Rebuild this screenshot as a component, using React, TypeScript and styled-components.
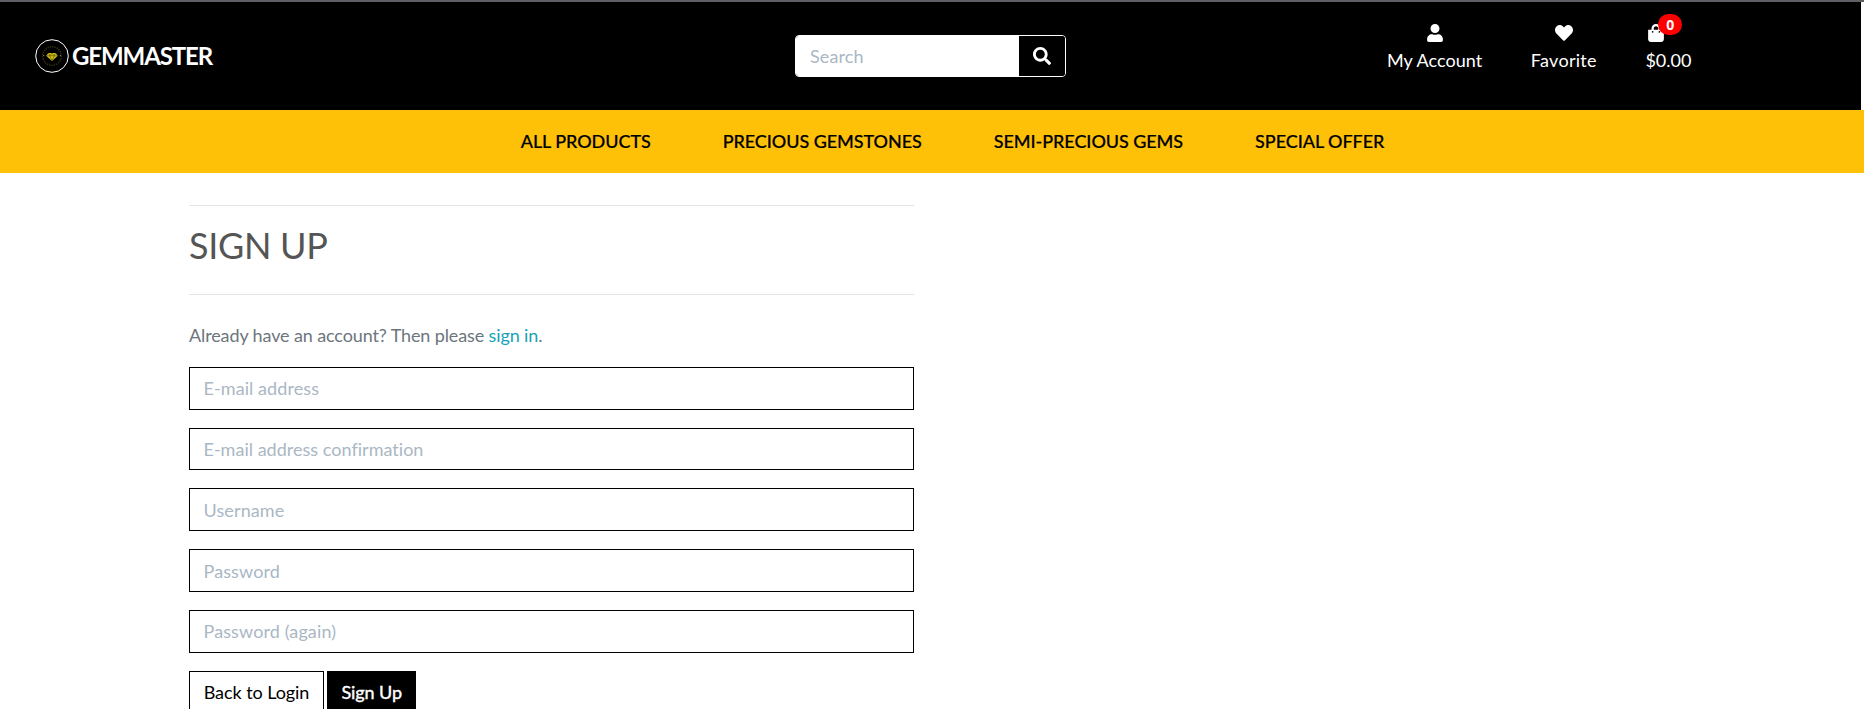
import React from "react";
import styled, { createGlobalStyle, css } from "styled-components";
import { FaUser, FaHeart, FaShoppingBag, FaSearch } from "react-icons/fa";

const GlobalStyle = createGlobalStyle`
  *, *::before, *::after { box-sizing: border-box; }
  html, body { margin: 0; height: 709px; overflow: hidden; background: #fff; }
  body { font: 400 18px/27px Lato, sans-serif; color: #555; }
`;

const Page = styled.div`
  height: 709px;
  overflow: hidden;
  border-top: 2px solid #5f6066;
`;

const Header = styled.header`
  display: grid;
  grid-template-columns: 795px 592px 1fr;
  width: 1861px;
  height: 108px;
  background: #000;
  color: #fff;
`;

const Brand = styled.a`
  display: flex;
  align-items: center;
  gap: 3px;
  height: 108px;
  padding-left: 35px;
  font-size: 24px;
  font-weight: 700;
  letter-spacing: -1.1px;
  color: #fff;
`;

const BrandName = styled.span`
  padding-bottom: 2px;
`;

const BrandMark = styled.svg`
  width: 34px;
  height: 34px;
  display: block;
`;

const SearchForm = styled.form`
  display: flex;
  width: 271px;
  height: 42px;
  margin-top: 33px;
  border: 1px solid #fff;
  border-radius: 4px;
  overflow: hidden;
`;

const SearchInput = styled.input`
  width: 223px;
  padding: 0 14px;
  border: 0;
  background: #fff;
  font: inherit;
  letter-spacing: 0.1px;
  &::placeholder { color: #aab7c4; opacity: 1; }
`;

const SearchButton = styled.button`
  flex: 1;
  display: flex;
  align-items: center;
  justify-content: center;
  padding: 0;
  border: 0;
  background: #000;
  color: #fff;
  font-size: 18px;
`;

const Actions = styled.nav`
  display: flex;
  gap: 48.5px;
  padding-top: 22px;
`;

const Action = styled.a<{ $start?: boolean; $spacing?: number }>`
  position: relative;
  display: flex;
  flex-direction: column;
  align-items: ${(p) => (p.$start ? "flex-start" : "center")};
  height: 50px;
  color: #fff;
  letter-spacing: ${(p) => p.$spacing ?? 0}px;
  white-space: nowrap;
  svg {
    font-size: 18px;
    margin: 0 0 5px ${(p) => (p.$start ? "2.5px" : "0")};
    width: ${(p) => (p.$start ? "16px" : "18px")};
  }
`;

const CartBadge = styled.span`
  position: absolute;
  left: 13px;
  top: -10px;
  width: 24px;
  height: 21px;
  border-radius: 11px;
  background: #f00;
  font: 700 14px/21px "Open Sans", sans-serif;
  text-align: center;
`;

const CategoryBar = styled.nav`
  display: flex;
  justify-content: center;
  align-items: center;
  gap: 72px;
  height: 63px;
  padding-left: 41px;
  background: #ffc107;
`;

const CategoryLink = styled.a`
  color: #000;
  font-weight: 500;
  letter-spacing: -0.06px;
  -webkit-text-stroke: 0.2px #000;
  white-space: nowrap;
`;

const Main = styled.main`
  width: 725px;
  margin: 32px 0 0 189px;
`;

const Rule = styled.hr`
  height: 1px;
  margin: 0;
  border: 0;
  background: #e5e5e5;
`;

const Title = styled.h1`
  margin: 17px 0 27px;
  font-size: 36px;
  font-weight: 400;
  line-height: 44px;
  letter-spacing: -0.3px;
  color: #555;
`;

const Intro = styled.p`
  margin: 27px 0 17.9px;
  letter-spacing: -0.12px;
  color: #6c757d;
`;

const InlineLink = styled.a`
  color: #17a2b8;
`;

const Field = styled.input<{ $spacing?: number }>`
  display: block;
  width: 100%;
  height: 42.75px;
  margin: 0 0 18px;
  padding: 0 13.5px;
  border: 1px solid #000;
  border-radius: 0;
  background: #fff;
  font: inherit;
  letter-spacing: ${(p) => p.$spacing ?? 0}px;
  &::placeholder { color: #aab7c4; opacity: 1; }
`;

const Buttons = styled.div`
  display: flex;
  gap: 3px;
`;

const Button = styled.button<{ $solid?: boolean }>`
  height: 43px;
  padding: 0 13.5px;
  border: 1px solid #000;
  background: #fff;
  color: #000;
  font: inherit;
  letter-spacing: -0.06px;
  white-space: nowrap;
  width: 135px;
  ${(p) =>
    p.$solid &&
    css`
      width: 89px;
      background: #000;
      color: #fff;
      letter-spacing: -0.1px;
      -webkit-text-stroke: 0.4px #fff;
    `}
`;

const categories = ["ALL PRODUCTS", "PRECIOUS GEMSTONES", "SEMI-PRECIOUS GEMS", "SPECIAL OFFER"];

const fields = [
  { label: "E-mail address", type: "email", spacing: 0.08 },
  { label: "E-mail address confirmation", type: "email", spacing: 0.02 },
  { label: "Username", type: "text", spacing: 0.12 },
  { label: "Password", type: "password", spacing: 0.12 },
  { label: "Password (again)", type: "password", spacing: 0.12 },
];

function GemLogo() {
  return (
    <BrandMark viewBox="0 0 34 34" fill="none">
      <circle cx="17" cy="17" r="16.3" stroke="#fff" strokeWidth="1" />
      <circle cx="17" cy="17" r="9.3" stroke="#38350f" strokeWidth="1.6" strokeDasharray="1.2 1.1" />
      <path d="M13.4 14h7.2l2.2 2.8L17 22l-5.8-5.2z" fill="#d6c31a" />
      <path d="M11.4 16.8h11.2M14.6 16.8 17 21.5l2.4-4.7M13.6 14.2l1.2 2.4L17 14.2l2.2 2.4 1.2-2.4" stroke="#4b4300" strokeWidth=".6" />
      <path d="M8 16.5h1.2M24.8 16.5H26" stroke="#777" strokeWidth="1" />
    </BrandMark>
  );
}

export default function App() {
  return (
    <Page>
      <GlobalStyle />
      <Header>
        <Brand>
          <GemLogo />
          <BrandName>GEMMASTER</BrandName>
        </Brand>
        <SearchForm>
          <SearchInput placeholder="Search" />
          <SearchButton type="button" aria-label="Search">
            <FaSearch />
          </SearchButton>
        </SearchForm>
        <Actions>
          <Action $spacing={0.05}>
            <FaUser />
            My Account
          </Action>
          <Action $spacing={0.3}>
            <FaHeart />
            Favorite
          </Action>
          <Action $start>
            <FaShoppingBag />
            $0.00
            <CartBadge>0</CartBadge>
          </Action>
        </Actions>
      </Header>
      <CategoryBar>
        {categories.map((name) => (
          <CategoryLink key={name}>{name}</CategoryLink>
        ))}
      </CategoryBar>
      <Main>
        <Rule />
        <Title>SIGN UP</Title>
        <Rule />
        <Intro>
          Already have an account? Then please <InlineLink>sign in</InlineLink>.
        </Intro>
        {fields.map((f) => (
          <Field key={f.label} type={f.type} placeholder={f.label} $spacing={f.spacing} />
        ))}
        <Buttons>
          <Button type="button">Back to Login</Button>
          <Button type="button" $solid>
            Sign Up
          </Button>
        </Buttons>
      </Main>
    </Page>
  );
}
